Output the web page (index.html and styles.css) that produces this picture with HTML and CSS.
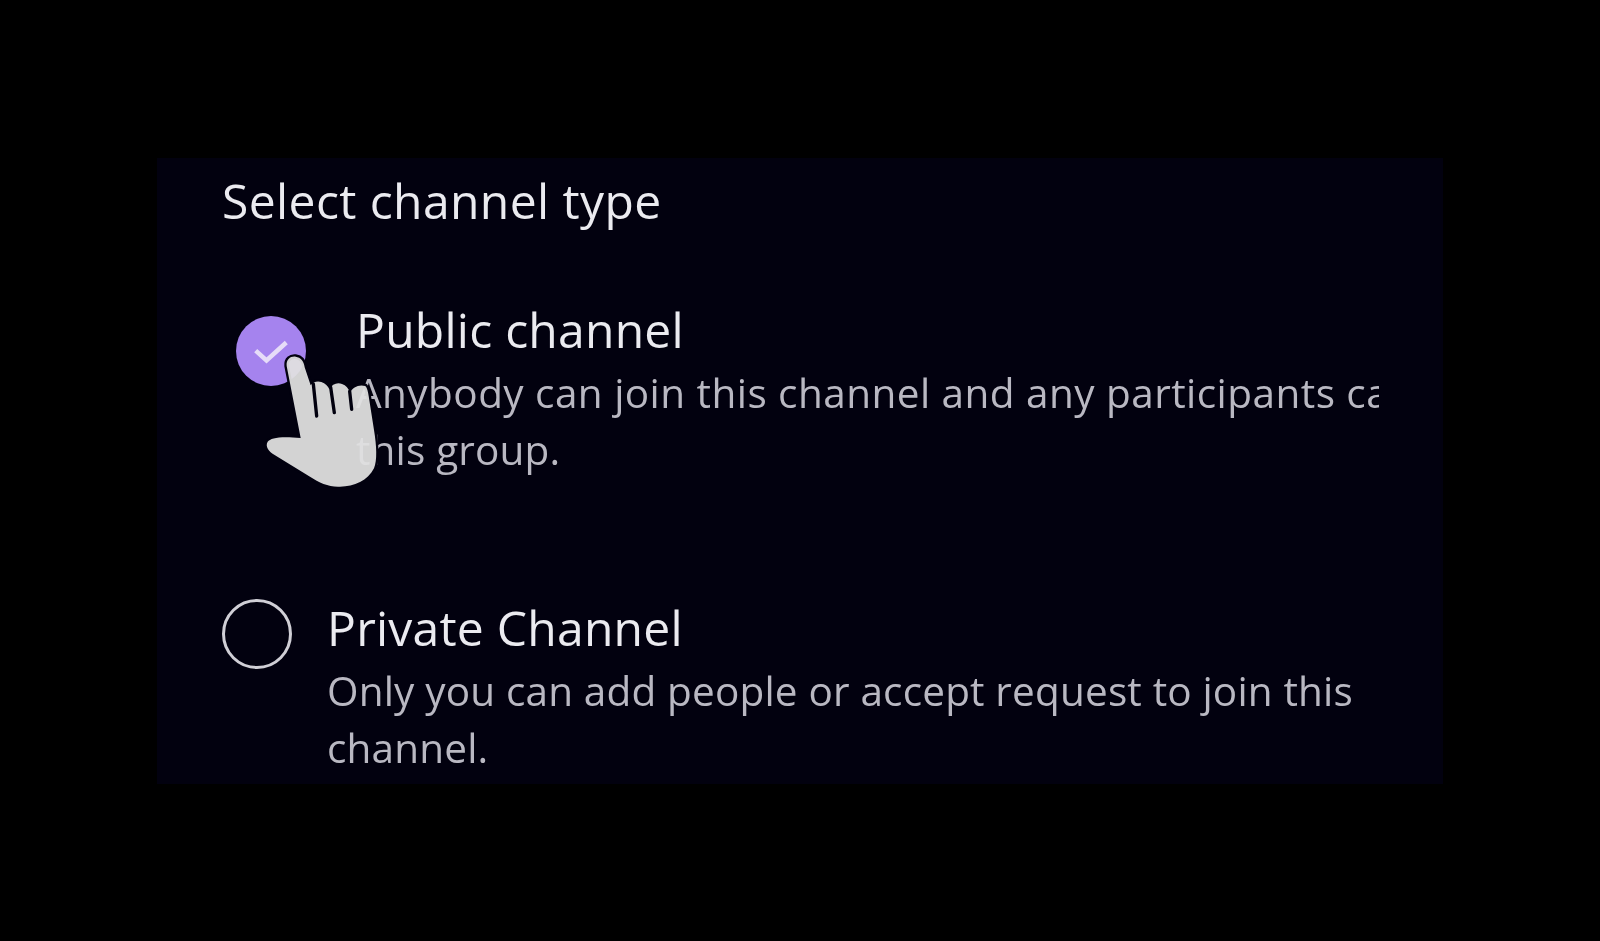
FILE: index.html
```html
<!DOCTYPE html>
<html lang="en">
<head>
    <meta charset="UTF-8">
    <meta name="viewport" content="width=device-width, initial-scale=1.0">
    <title>Select channel type</title>
    <link rel="stylesheet" href="styles.css">
</head>
<body>
    <div class="panel">
        <h1 class="panel-title">Select channel type</h1>

        <div class="option option-public">
            <div class="radio radio-checked">
                <svg class="check" viewBox="0 0 40 30">
                    <path d="M3 14 L15 25 L37 5"/>
                </svg>
            </div>
            <div class="option-text">
                <div class="option-name">Public channel</div>
                <p class="option-desc option-desc-wide">Anybody can join this channel and any participants can</p>
                <p class="option-desc">this group.</p>
            </div>
        </div>

        <div class="option option-private">
            <div class="radio"></div>
            <div class="option-text">
                <div class="option-name">Private Channel</div>
                <p class="option-desc">Only you can add people or accept request to join this</p>
                <p class="option-desc">channel.</p>
            </div>
        </div>

        <!-- pointer over the checked radio -->
        <svg class="hand" viewBox="0 0 720 660">
            <path class="hand-shape" d="M260 228 C258 208 272 198 287 200 C302 202 312 214 314 232 L332 286 C338 276 352 272 364 276 C376 280 384 288 388 298 C396 282 412 276 426 282 C438 286 446 296 450 308 C458 292 476 282 496 288 C502 294 504 306 506 318 L522 420 C530 470 532 510 522 535 C504 572 462 590 420 590 C388 592 358 578 330 560 L225 496 C205 484 195 468 203 455 C212 444 240 438 302 444 Z"/>
            <path class="hand-gap" d="M340 282 L350 378"/>
            <path class="hand-gap" d="M392 292 L403 368"/>
            <path class="hand-gap" d="M449 304 L455 358"/>
        </svg>
    </div>
</body>
</html>
```

FILE: styles.css
```css
body {
    margin: 0;
    padding: 158px 0 0 157px;
    background-color: #000;
    font-family: "Open Sans", "Lato", sans-serif;
}
.panel {
    position: relative;
    box-sizing: border-box;
    width: 1286px;
    height: 626px;
    padding: 13px 0 0 65px;
    background-color: #02010f;
    overflow: hidden;
    filter: blur(0.6px);
}
.panel-title {
    margin: 0;
    font-size: 48px;
    line-height: 60px;
    font-weight: 400;
    letter-spacing: 0.4px;
    color: #ebebf0;
}
.option {
    display: flex;
    align-items: flex-start;
}
.option-public {
    margin-top: 65px;
    padding-left: 14px;
    gap: 50px;
}
.option-public .radio {
    margin-top: 20px;
}
.option-public .option-text {
    width: 1023px;
    overflow: hidden;
}
.option-private {
    margin-top: 116px;
    gap: 35px;
}
.radio {
    flex: none;
    box-sizing: border-box;
    width: 70px;
    height: 70px;
    margin-top: 5px;
    border: 3px solid #d0cfd6;
    border-radius: 50%;
}
.radio-checked {
    display: flex;
    align-items: center;
    justify-content: center;
    border: none;
    background-color: #a583ee;
}
.check {
    width: 36px;
    height: 27px;
}
.check path {
    fill: none;
    stroke: #e6dcf8;
    stroke-width: 5;
}
.option-name {
    font-size: 48px;
    line-height: 68px;
    letter-spacing: 0.25px;
    color: #ebebf0;
}
.option-desc {
    margin: 0;
    font-size: 40.5px;
    line-height: 57px;
    letter-spacing: 0.17px;
    color: #b9b8c2;
    white-space: nowrap;
}
.option-desc-wide {
    letter-spacing: 0.45px;
}
.hand {
    position: absolute;
    left: 43px;
    top: 132px;
    width: 240px;
    height: 220px;
}
.hand-shape {
    fill: #e0e0e0;
    fill-opacity: 0.94;
    stroke: #02010f;
    stroke-width: 14;
    paint-order: stroke;
    stroke-linejoin: round;
}
.hand-gap {
    fill: none;
    stroke: #02010f;
    stroke-width: 10;
    stroke-linecap: round;
}
```
